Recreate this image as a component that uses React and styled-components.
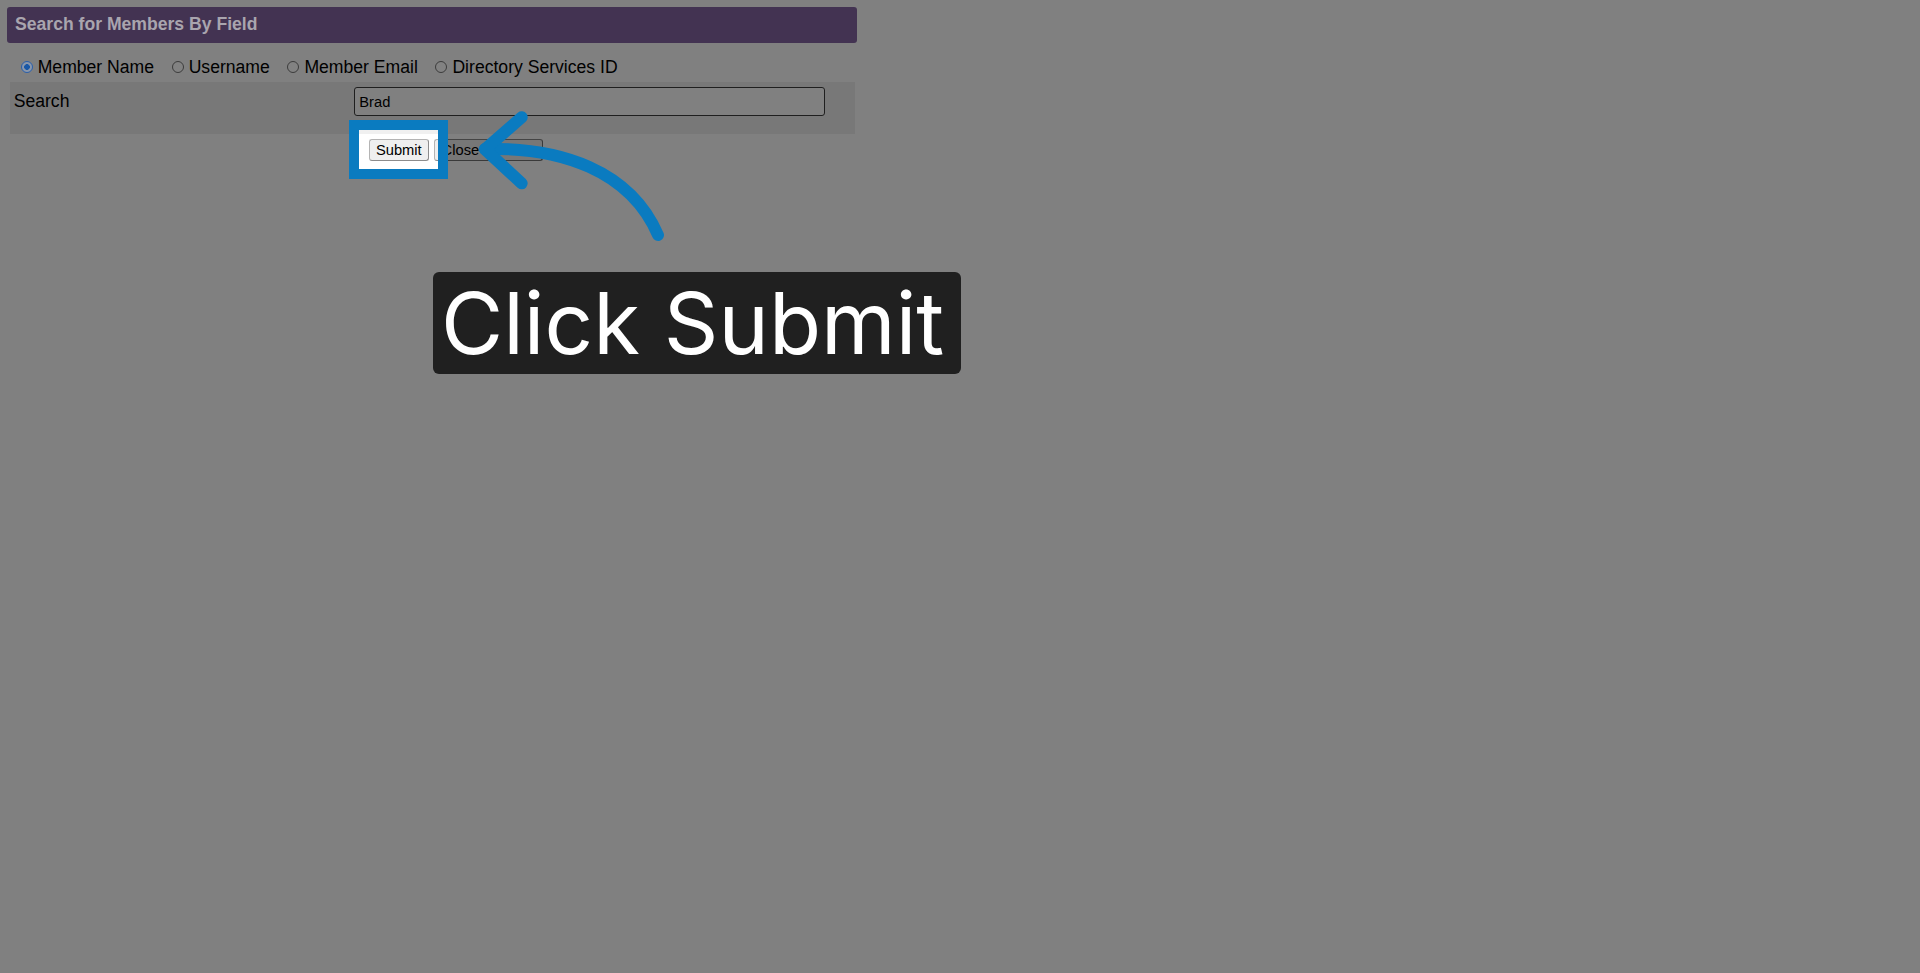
import React from "react";
import styled, { createGlobalStyle } from "styled-components";

const Global = createGlobalStyle`
  html, body { margin: 0; padding: 0; }
  body {
    background: #808080;
    font-family: "Liberation Sans", Arial, sans-serif;
    color: #000;
  }
  #root { min-height: 973px; }
`;

const Page = styled.div`
  position: relative;
  min-height: 973px;
  padding: 7.3px 0 0 7.3px;
  box-sizing: border-box;
`;

const Panel = styled.div`
  width: 849.4px;
  display: flex;
  flex-direction: column;
`;

const Header = styled.div`
  height: 35.4px;
  box-sizing: border-box;
  background: #433352;
  border-radius: 3px;
  display: flex;
  align-items: center;
  padding-left: 7.7px;
  font-size: 17.6px;
  font-weight: bold;
  color: #a9a5ae;
`;

const RadioRow = styled.div`
  display: flex;
  align-items: center;
  gap: 17.6px;
  margin-top: 14.5px;
  height: 20px;
  padding-left: 13.4px;
  font-size: 17.6px;
  line-height: 20px;
`;

const Option = styled.label`
  display: flex;
  align-items: center;
  gap: 5px;
`;

const Radio = styled.input.attrs({ type: "radio" })`
  appearance: none;
  margin: 0;
  width: 12px;
  height: 12px;
  box-sizing: border-box;
  border-radius: 50%;
  border: 1px solid ${(p) => (p.checked ? "#2a5fab" : "#3c3c3c")};
  background: ${(p) =>
    p.checked
      ? "radial-gradient(circle, #1b58a6 0 2.6px, #8a97ab 3.1px 100%)"
      : "#828282"};
`;

const SearchRow = styled.div`
  margin: 4.5px 0 0 2.7px;
  width: 845px;
  height: 52.3px;
  box-sizing: border-box;
  background: #787878;
  display: grid;
  grid-template-columns: 344.3px 470.7px;
  align-items: start;
  padding-top: 5.6px;
`;

const Label = styled.div`
  height: 28.7px;
  display: flex;
  align-items: center;
  padding-left: 3.7px;
  font-size: 17.6px;
`;

const TextInput = styled.input`
  width: 470.7px;
  height: 28.7px;
  box-sizing: border-box;
  margin: 0;
  border: 1.5px solid #1f1f1f;
  border-radius: 3px;
  background: #808080;
  padding: 0 4px;
  font-family: "Liberation Sans", Arial, sans-serif;
  font-size: 14.7px;
  color: #000;
  outline: none;
`;

const ButtonRow = styled.div`
  display: flex;
  gap: 5px;
  margin-top: ${(p) => p.$top}px;
  padding-left: ${(p) => p.$left}px;
`;

const Button = styled.button`
  height: 21.4px;
  box-sizing: border-box;
  margin: 0;
  padding: 0 6.3px;
  border-radius: 3px;
  font-family: "Liberation Sans", Arial, sans-serif;
  font-size: 14.7px;
  color: #000;
  white-space: nowrap;
  flex-shrink: 0;
  background: ${(p) => (p.$lit ? "#efefef" : "#777777")};
  border: 1px solid ${(p) => (p.$lit ? "#b4b4b4" : "#444444")};
  border-bottom-color: ${(p) => (p.$lit ? "#8c8c8c" : "#3a3a3a")};
  border-right-color: ${(p) => (p.$lit ? "#8c8c8c" : "#3a3a3a")};
`;

/* the left edge of the next button, seen through the spotlight */
const ButtonEdge = styled.span`
  flex-shrink: 0;
  width: 20px;
  height: 21.4px;
  box-sizing: border-box;
  border-radius: 3px 0 0 3px;
  background: #efefef;
  border: 1px solid #b4b4b4;
  border-right: none;
  border-bottom-color: #8c8c8c;
`;

const Spotlight = styled.div`
  position: absolute;
  left: 349px;
  top: 120px;
  width: 99.3px;
  height: 59.3px;
  box-sizing: border-box;
  border: 10px solid #0a7bc0;
  background: #ffffff;
  overflow: hidden;
`;

const LitStrip = styled.div`
  height: 4px;
  background: #f0f0f0;
`;

const ArrowSvg = styled.svg`
  position: absolute;
  left: 0;
  top: 0;
  pointer-events: none;
`;

const Callout = styled.div`
  position: absolute;
  left: 432.5px;
  top: 271.8px;
  width: 528px;
  height: 102px;
  box-sizing: border-box;
  padding: 0 0 0 8.5px;
  background: #202020;
  border-radius: 6px;
  color: #ffffff;
  font-family: Inter, "Noto Sans", sans-serif;
  font-size: 85.2px;
  line-height: 102px;
  white-space: nowrap;
`;

const options = ["Member Name", "Username", "Member Email", "Directory Services ID"];

export default function App() {
  return (
    <>
      <Global />
      <Page>
        <Panel>
          <Header>Search for Members By Field</Header>
          <RadioRow>
            {options.map((o, i) => (
              <Option key={o}>
                <Radio name="field" checked={i === 0} readOnly />
                {o}
              </Option>
            ))}
          </RadioRow>
          <SearchRow>
            <Label>Search</Label>
            <TextInput defaultValue="Brad" />
          </SearchRow>
          <ButtonRow $top={5.3} $left={361.7}>
            <Button>Submit</Button>
            <Button>Close Window</Button>
          </ButtonRow>
        </Panel>

        <Spotlight>
          <LitStrip />
          <ButtonRow $top={5.3} $left={9.7}>
            <Button $lit>Submit</Button>
            <ButtonEdge />
          </ButtonRow>
        </Spotlight>

        <ArrowSvg width="700" height="260" viewBox="0 0 700 260">
          <path
            d="M485 149 C 560 147, 630 170, 658 235"
            fill="none"
            stroke="#0a7bc0"
            strokeWidth="12"
            strokeLinecap="round"
          />
          <path
            d="M521.7 117.3 L485 149.3 L521.7 183.3"
            fill="none"
            stroke="#0a7bc0"
            strokeWidth="12"
            strokeLinecap="round"
            strokeLinejoin="round"
          />
        </ArrowSvg>

        <Callout>Click Submit</Callout>
      </Page>
    </>
  );
}
